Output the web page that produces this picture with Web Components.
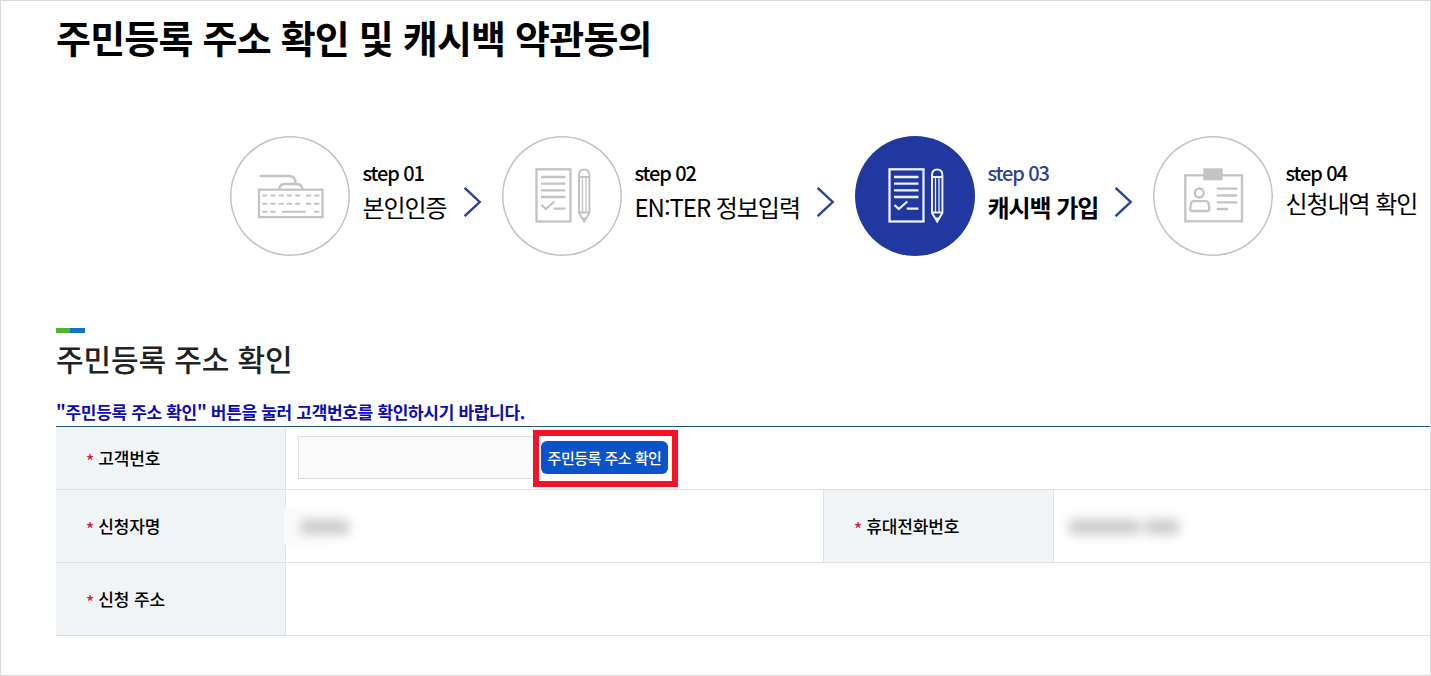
<!DOCTYPE html>
<html lang="ko">
<head>
<meta charset="utf-8">
<title>주민등록 주소 확인 및 캐시백 약관동의</title>
<style>
  body {
    margin: 0;
    font-family: 'Noto Sans CJK KR', 'Noto Sans', sans-serif;
    color: #000;
  }
</style>
</head>
<body>
<cashback-page></cashback-page>

<script>
const define = (name, html, setup) => {
  const template = document.createElement('template')
  template.innerHTML = html
  window.customElements.define(name, class extends HTMLElement {
    constructor () {
      super()
      this.attachShadow({ mode: 'open' })
        .appendChild(template.content.cloneNode(true))
    }

    connectedCallback () {
      if (setup) setup(this, this.shadowRoot)
    }
  })
}

const ICONS = {
  keyboard: `
    <rect x="29" y="53.7" width="63.5" height="27.4"/>
    <path d="M49.3 53v-.5q.7-4.5 6-4.5h11q5.3 0 6 4.5v.5M29.7 40H59q6.5 0 6.5 7.5"/>
    <path stroke-width="2" d="M32.3 59.5h5m3.2 0h5m3.2 0h5m3.2 0h5m3.2 0h5m6 0h5m3.2 0h5
      M32.3 67.7h5m3.2 0h5m3.2 0h5m3.2 0h5m3.2 0h5m6 0h5m3.2 0h5
      M32.3 75.7h5m3.2 0h5M52 75.7h23.7M84.3 75.7h5"/>`,
  document: `
    <rect x="34.5" y="33.3" width="34" height="52.2"/>
    <path d="M39 41h24.5M39 47.7h24.5M39 54.3h24.5M39 61h24.5M51.7 72.7h11.8"/>
    <path d="M39.5 69l4.3 4 8.5-7.5"/>
    <path stroke-width="2" d="M77 77V39q0-5.5 5.2-5.5t5.2 5.5v38l-5.2 8.5zM77 41h10.4M77 76.500h10.4"/>
    <path stroke-width="1.3" d="M80.5 41v35M84 41v35"/>
    <path stroke-width="1" fill="currentColor" d="M80.5 82h3.4l-1.7 3.5z"/>`,
  badge: `
    <rect x="32.3" y="39.3" width="56.7" height="46"/>
    <rect x="50.3" y="32.3" width="19.4" height="12" fill="currentColor" stroke="none"/>
    <circle cx="46.3" cy="57" r="4.5"/>
    <path d="M40.5 65.2h12.3q2.6 0 3 3.5l.5 4.3q0 2-2 2H39.3q-2 0-2-2l.5-4.3q.4-3.5 2.7-3.5z"/>
    <path d="M63.7 52.7h20.6M63.7 59.5h20.6M63.7 66.3h20.6M63.7 73H75"/>`
}

define('step-icon', `
  <style>
    :host {
      display: block;
      box-sizing: border-box;
      width: 120px;
      height: 120px;
      border-radius: 50%;
      background: #fff;
      box-shadow: inset 0 0 0 1.5px #c3c3c3;
      color: #c3c3c3;
    }
    :host([active]) {
      background: #2038a0;
      box-shadow: none;
      color: #eef0fb;
    }
    svg { display: block; }
  </style>
  <svg width="120" height="120" viewBox="0 0 120 120" fill="none" stroke="currentColor" stroke-width="2.3"></svg>
`, (el, root) => {
  root.querySelector('svg').innerHTML = ICONS[el.getAttribute('name')]
})

define('step-item', `
  <style>
    :host {
      display: flex;
      flex: none;
      letter-spacing: -1.05px;
    }
    .text {
      margin-left: 12.5px;
      padding-top: 23px;
      white-space: nowrap;
    }
    .number {
      font-size: 20px;
      line-height: 28px;
      font-weight: 500;
      letter-spacing: -1.1px;
    }
    .label {
      margin-top: 3px;
      font-size: 24px;
      line-height: 34px;
    }
    :host([active]) .number { color: #2c4196; }
    :host([active]) .label { font-weight: 700; }
    :host([last]) .label { margin-top: -1px; }
    .arrow {
      display: block;
      margin: 51px 20px 0 .5px;
    }
    :host([last]) .arrow { display: none; }
  </style>
  <slot name="icon"></slot>
  <div class="text">
    <div class="number"><slot name="number"></slot></div>
    <div class="label"><slot></slot></div>
  </div>
  <svg class="arrow" width="18" height="30" viewBox="0 0 18 30" fill="none" stroke="#2c4196" stroke-width="2.4">
    <path d="M.6 .8L15.7 15 .6 29.2"/>
  </svg>
`, (el, root) => {
  // every step reserves its own room for the label
  root.querySelector('.text').style.width = el.getAttribute('text-width') + 'px'
})

define('section-title', `
  <style>
    :host { display: block; }
    .bar {
      width: 29px;
      height: 5px;
      background: linear-gradient(90deg, #4db533 50%, #1273c6 50%);
    }
    h2 {
      margin: 2px 0 0;
      font-size: 30px;
      line-height: 46px;
      font-weight: 500;
      letter-spacing: -.1px;
      color: #222;
    }
  </style>
  <div class="bar"></div>
  <h2><slot></slot></h2>
`)

define('form-row', `
  <style>
    :host {
      display: flex;
      height: 72px;
      border-bottom: 1px solid #dfe1e3;
    }
    :host([first]) { height: 62px; }
  </style>
  <slot></slot>
`)

define('form-field', `
  <style>
    :host {
      display: flex;
      flex: 1;
    }
    :host([half]) { flex: none; width: 767px; }
    .label {
      box-sizing: border-box;
      display: flex;
      align-items: center;
      gap: 4px;
      flex: none;
      width: 230px;
      padding: 0 0 1px 30px;
      background: #f0f4f7;
      border-right: 1px solid #dfe1e3;
      font-size: 17px;
      font-weight: 500;
      letter-spacing: -.1px;
    }
    .required {
      color: #d3222f;
      line-height: 20px;
      padding-top: 7px;
    }
    .value {
      position: relative;
      display: flex;
      align-items: center;
      flex: 1;
      padding-left: 12px;
    }
    :host([divided]) .label { border-left: 1px solid #dfe1e3; width: 231px; }
  </style>
  <div class="label"><span class="required">*</span><span><slot name="label"></slot></span></div>
  <div class="value"><slot></slot></div>
`)

define('address-check', `
  <style>
    :host {
      display: flex;
      align-items: center;
      position: relative;
      margin-top: -1px;
    }
    input {
      box-sizing: border-box;
      width: 237px;
      height: 43px;
      margin: 0;
      border: 1px solid #dcdddd;
      background: #fafafa;
    }
    button {
      width: 127px;
      height: 33px;
      margin: 0 0 0 6px;
      padding: 0;
      border: 0;
      border-radius: 6px;
      background: #0b53c8;
      color: #fff;
      font: 500 15px/33px 'Noto Sans CJK KR', sans-serif;
      letter-spacing: -.5px;
      white-space: nowrap;
    }
    .highlight {
      position: absolute;
      box-sizing: border-box;
      left: 235px;
      top: -6px;
      width: 145px;
      height: 57px;
      border: 6px solid #f41129;
    }
  </style>
  <input type="text" readonly>
  <button type="button"><slot></slot></button>
  <div class="highlight"></div>
`)

define('masked-value', `
  <style>
    :host { display: block; }
    :host([patch]) {
      margin-left: -14px;
      padding-left: 14px;
      background: linear-gradient(90deg, #fafafb, #fff 40px);
    }
    .blur {
      display: flex;
      gap: 5px;
      padding: 12px 14px 11px 3px;
      filter: blur(6px);
    }
    i {
      height: 14px;
      background: #c6c6c6;
    }
  </style>
  <div class="blur"></div>
`, (el, root) => {
  const blur = root.querySelector('.blur')
  for (const width of el.getAttribute('widths').split(' ')) {
    const bar = document.createElement('i')
    bar.style.width = width + 'px'
    blur.appendChild(bar)
  }
})

define('cashback-page', `
  <style>
    :host {
      display: block;
      box-sizing: border-box;
      width: 1431px;
      height: 676px;
      padding-left: 55px;
      border: 1px solid #d9d9d9;
      background: #fff;
      overflow: hidden;
    }
    h1 {
      margin: 0;
      padding-top: 8px;
      font-size: 38px;
      line-height: 56px;
      font-weight: 700;
      letter-spacing: -.8px;
    }
    .steps {
      display: flex;
      padding: 71px 0 72px 174px;
    }
    .notice {
      margin: 18px 0 0;
      font-size: 17px;
      line-height: 26px;
      font-weight: 700;
      color: #0c0bb4;
      letter-spacing: -.32px;
    }
    .form { border-top: 1px solid #22567c; margin-top: 1px; }
  </style>
  <h1>주민등록 주소 확인 및 캐시백 약관동의</h1>
  <div class="steps">
    <step-item text-width="101"><step-icon slot="icon" name="keyboard"></step-icon><span slot="number">step 01</span>본인인증</step-item>
    <step-item text-width="182"><step-icon slot="icon" name="document"></step-icon><span slot="number">step 02</span>EN:TER 정보입력</step-item>
    <step-item text-width="127" active><step-icon slot="icon" name="document" active></step-icon><span slot="number">step 03</span>캐시백 가입</step-item>
    <step-item text-width="144" last><step-icon slot="icon" name="badge"></step-icon><span slot="number">step 04</span>신청내역 확인</step-item>
  </div>
  <section-title>주민등록 주소 확인</section-title>
  <p class="notice">"주민등록 주소 확인" 버튼을 눌러 고객번호를 확인하시기 바랍니다.</p>
  <div class="form">
    <form-row first>
      <form-field><span slot="label">고객번호</span><address-check>주민등록 주소 확인</address-check></form-field>
    </form-row>
    <form-row>
      <form-field half><span slot="label">신청자명</span><masked-value patch widths="48"></masked-value></form-field>
      <form-field divided><span slot="label">휴대전화번호</span><masked-value widths="71 34"></masked-value></form-field>
    </form-row>
    <form-row>
      <form-field><span slot="label">신청 주소</span></form-field>
    </form-row>
  </div>
`)
</script>
</body>
</html>
